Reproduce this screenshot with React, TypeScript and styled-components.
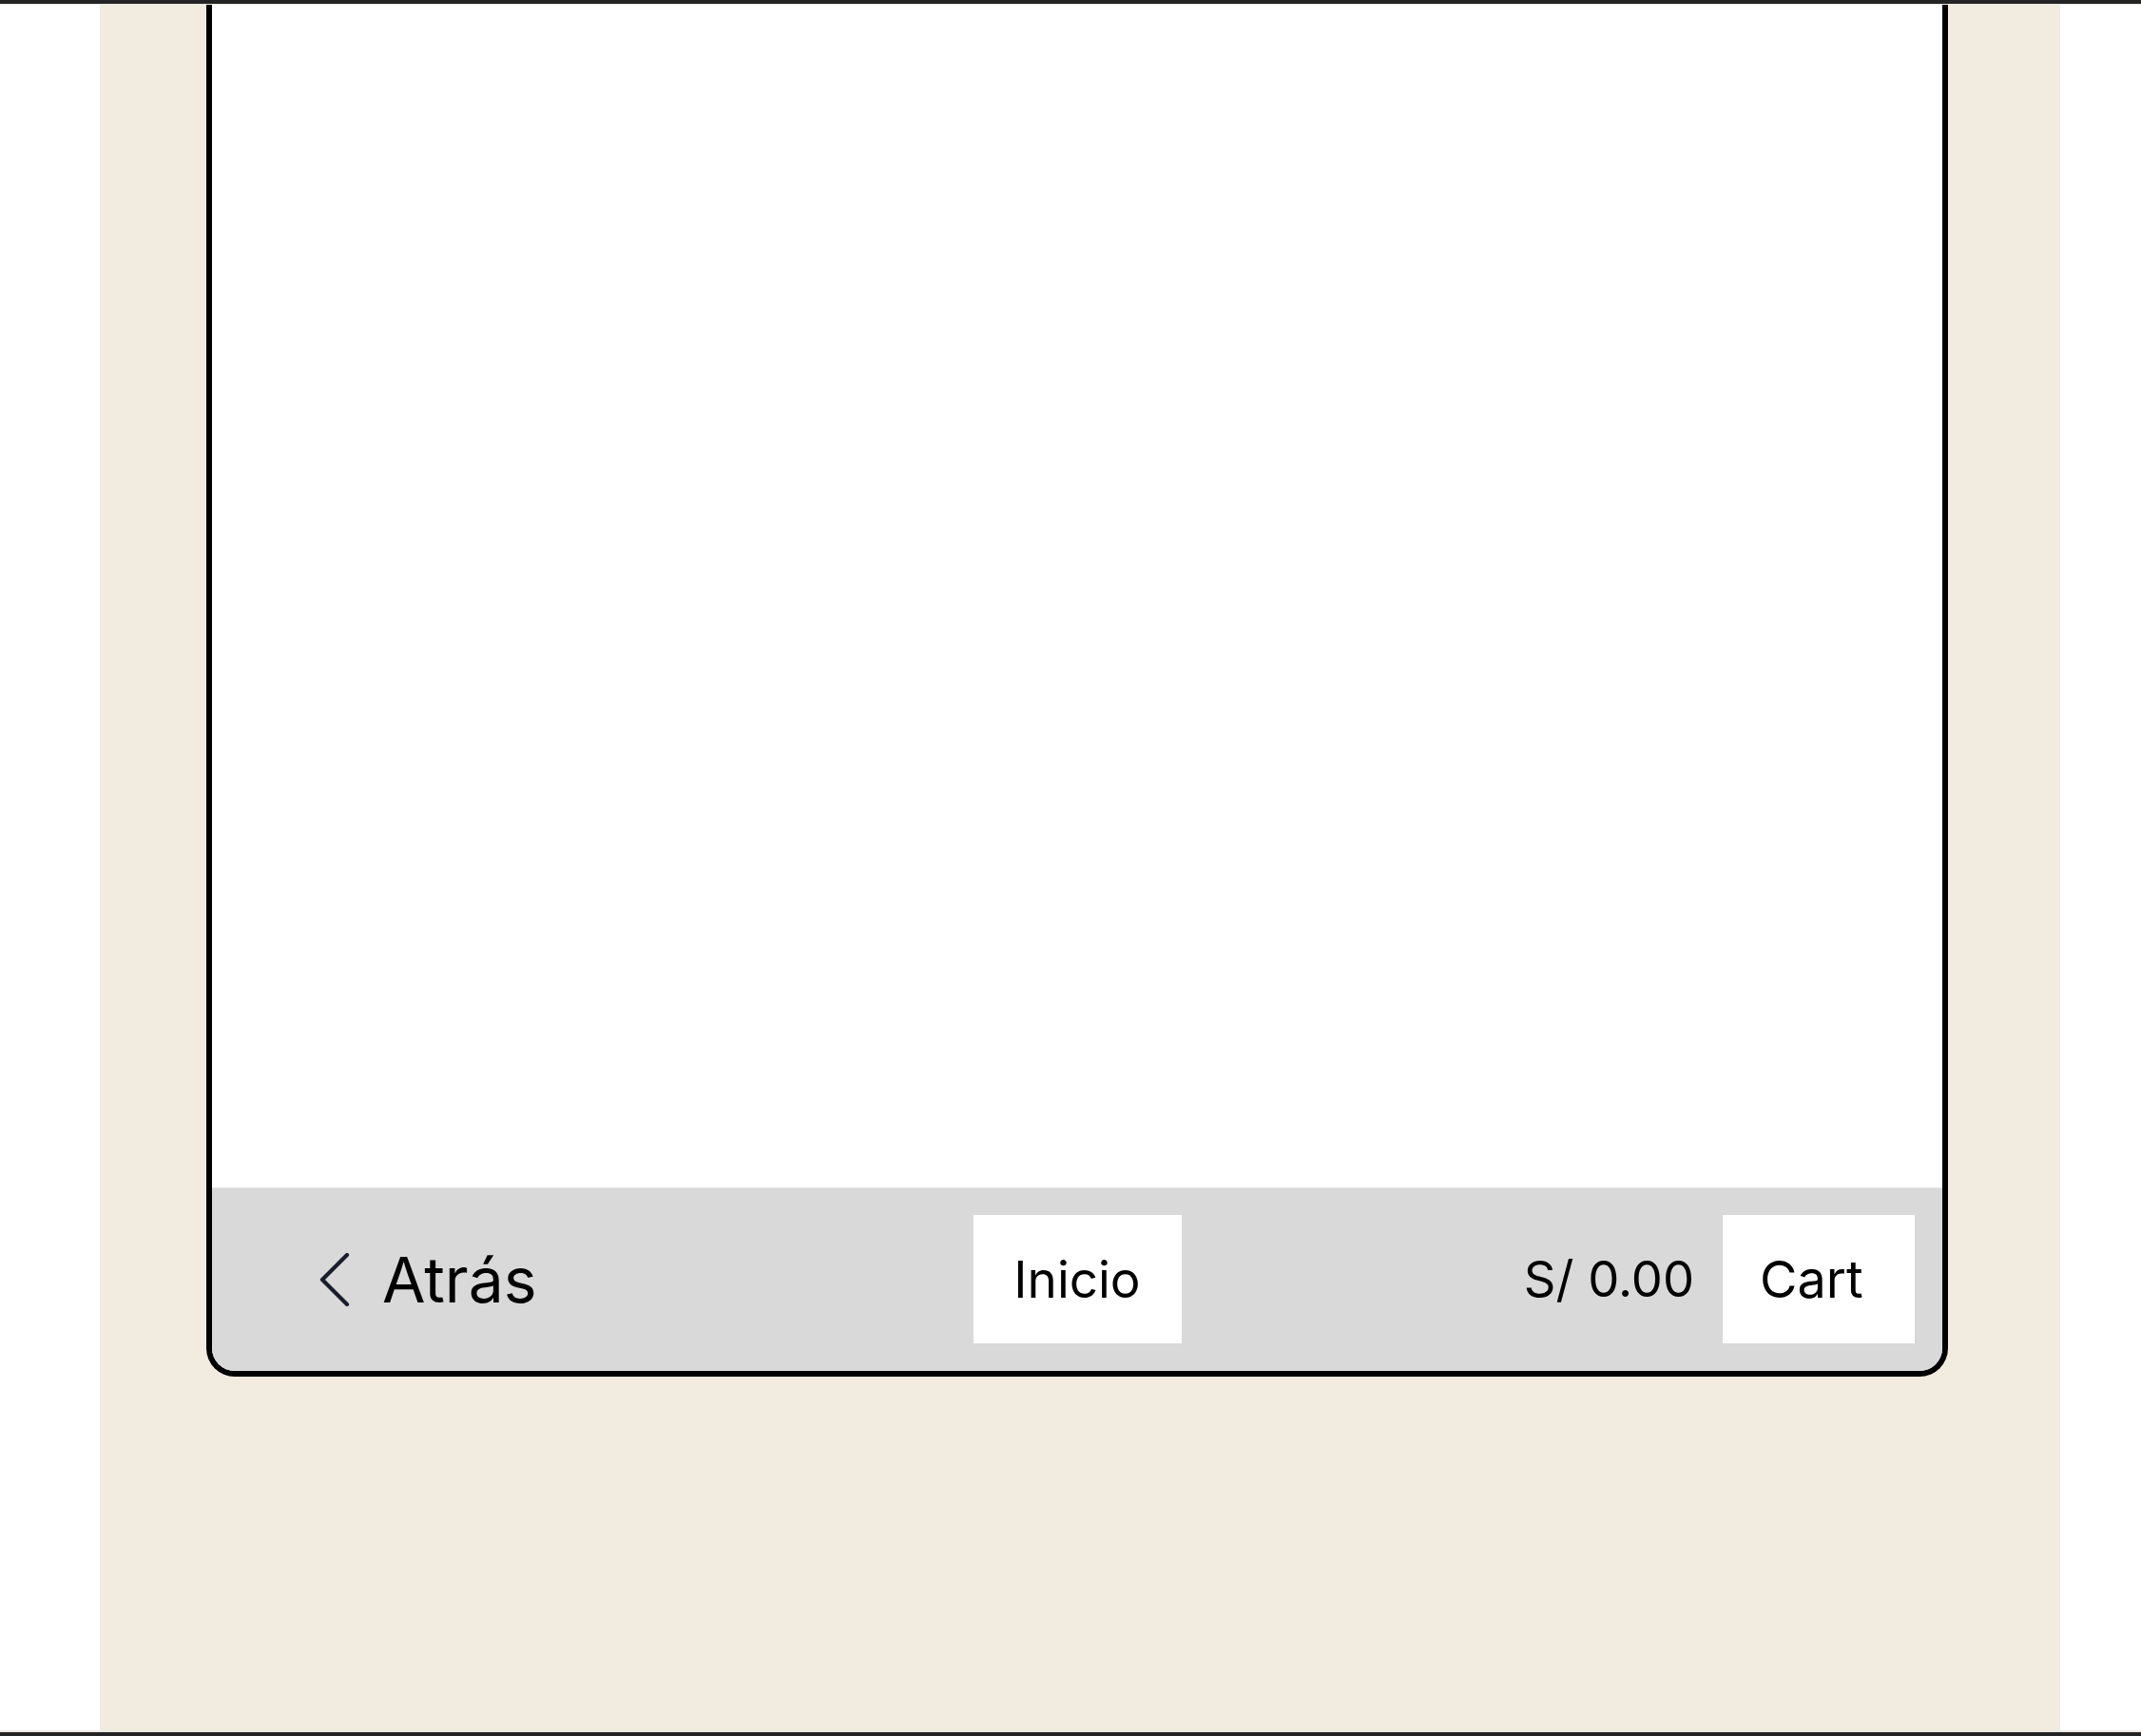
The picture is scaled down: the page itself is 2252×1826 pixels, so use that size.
import React from "react";
import styled, { createGlobalStyle } from "styled-components";

const Global = createGlobalStyle`
  html, body { margin: 0; padding: 0; background: #ffffff; }
  body { font-family: Inter, "Noto Sans", "Liberation Sans", sans-serif; }
  * { box-sizing: border-box; }
`;

const Page = styled.div`
  height: 1826px;
  display: flex;
  flex-direction: column;
  overflow: hidden;
`;

const EdgeBar = styled.div<{ $top?: boolean }>`
  height: ${(p) => (p.$top ? "5px" : "6px")};
  flex: none;
  background: #242424;
  ${(p) =>
    p.$top
      ? "border-bottom: 1px solid #ebe8e3;"
      : "border-top: 2px solid #ece9e4;"}
`;

const Main = styled.main`
  flex: 1;
  display: flex;
  padding-left: 105px;
  min-height: 0;
`;

const Column = styled.div`
  width: 2062px;
  background: #f2ebdf;
  padding: 0 118px 0 112px;
`;

const Frame = styled.div`
  height: 1443px;
  border: 6px solid #000000;
  border-top: none;
  border-radius: 0 0 30px 30px;
  overflow: hidden;
  display: flex;
  flex-direction: column;
  background: #ffffff;
`;

const Content = styled.div`
  flex: 1;
  background: #ffffff;
`;

const Nav = styled.nav`
  height: 193px;
  flex: none;
  background: #d9d9d9;
  border-top: 1px solid #e2e2e2;
  display: grid;
  grid-template-columns: 1fr auto 1fr;
  align-items: center;
  padding: 28px 29px 29px 29px;
`;

const BackLink = styled.a`
  justify-self: start;
  display: flex;
  align-items: center;
  gap: 34px;
  padding-left: 84px;
  color: #000000;
  text-decoration: none;
  font-size: 66px;
  line-height: 1;
  cursor: pointer;
`;

const Right = styled.div`
  justify-self: end;
  display: flex;
  align-items: center;
  gap: 30px;
  height: 100%;
`;

const Price = styled.span`
  font-size: 52.5px;
  color: #000000;
  line-height: 1;
`;

const NavButton = styled.button<{ $w: number; $size: number }>`
  width: ${(p) => p.$w}px;
  height: 135px;
  background: #ffffff;
  border: none;
  padding: 0;
  font-family: inherit;
  font-size: ${(p) => p.$size}px;
  color: #000000;
  display: flex;
  align-items: center;
  justify-content: center;
  cursor: pointer;
`;

const CartButton = styled(NavButton)`
  justify-content: flex-start;
  padding-left: 39px;
`;

const Chevron = () => (
  <svg width="32" height="56" viewBox="0 0 32 56" fill="none">
    <polyline
      points="29,2 3,28 29,54"
      stroke="#1a1d2e"
      strokeWidth="4.2"
      strokeLinecap="round"
      strokeLinejoin="round"
    />
  </svg>
);

export default function App() {
  return (
    <>
      <Global />
      <Page>
        <EdgeBar $top />
        <Main>
          <Column>
            <Frame>
              <Content />
              <Nav>
                <BackLink>
                  <Chevron />
                  <span>Atrás</span>
                </BackLink>
                <NavButton $w={219} $size={53}>Inicio</NavButton>
                <Right>
                  <Price>S/ 0.00</Price>
                  <CartButton $w={202} $size={54}>Cart</CartButton>
                </Right>
              </Nav>
            </Frame>
          </Column>
        </Main>
        <EdgeBar />
      </Page>
    </>
  );
}
